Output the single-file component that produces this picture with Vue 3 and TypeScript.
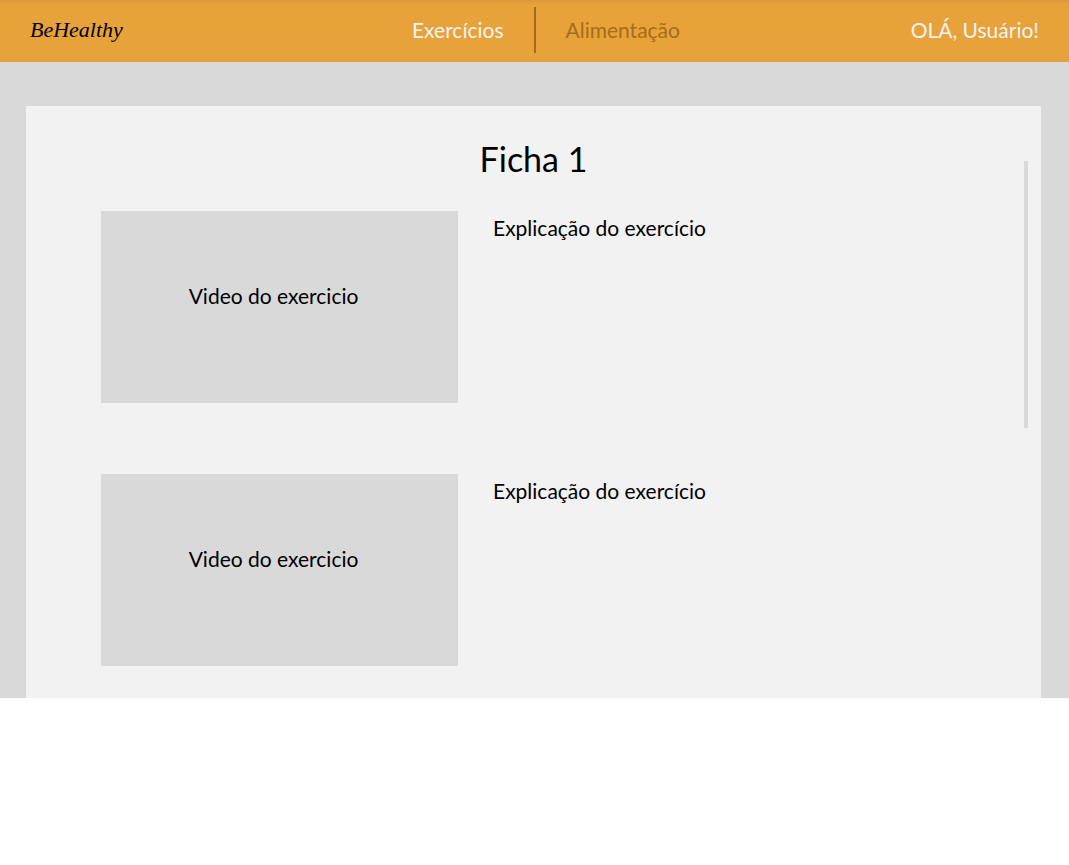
<script setup lang="ts">
interface Exercise {
  id: number
  video: string
  explanation: string
}

const sheetTitle = 'Ficha 1'

const exercises: Exercise[] = [
  { id: 1, video: 'Video do exercicio', explanation: 'Explicação do exercício' },
  { id: 2, video: 'Video do exercicio', explanation: 'Explicação do exercício' },
]
</script>

<template>
  <div class="page">
    <header class="topbar">
      <a class="logo" href="#">BeHealthy</a>
      <nav class="nav">
        <a class="nav-link active" href="#exercicios">Exercícios</a>
        <span class="divider" aria-hidden="true"></span>
        <a class="nav-link" href="#alimentacao">Alimentação</a>
      </nav>
      <a class="user" href="#perfil">OLÁ, Usuário!</a>
    </header>

    <main class="stage">
      <section class="sheet">
        <h1 class="title">{{ sheetTitle }}</h1>
        <ul class="list">
          <li v-for="item in exercises" :key="item.id" class="exercise">
            <div class="video">{{ item.video }}</div>
            <p class="explanation">{{ item.explanation }}</p>
          </li>
        </ul>
        <div class="scroll-thumb" aria-hidden="true"></div>
      </section>
    </main>
  </div>
</template>

<style>
body {
  margin: 0;
  background: #ffffff;
}
</style>

<style scoped>
.page {
  font-family: Lato, "Open Sans", sans-serif;
  font-size: 21px;
  line-height: 28px;
  color: #000000;
}

.topbar {
  display: grid;
  grid-template-columns: 1fr auto 1fr;
  align-items: center;
  height: 62px;
  padding: 0 30px 2px;
  box-sizing: border-box;
  background: linear-gradient(#de9936, #e7a23a 5px);
}

.topbar a {
  text-decoration: none;
}

.logo {
  justify-self: start;
  font-family: "Liberation Serif", serif;
  font-style: italic;
  font-size: 22px;
  color: #000000;
}

.nav {
  display: grid;
  grid-template-columns: 1fr 2px 1fr;
  column-gap: 30px;
  align-items: center;
}

.nav-link {
  color: #a66c1a;
}

.nav-link.active {
  justify-self: end;
  color: #f2f2f2;
}

.divider {
  height: 46px;
  background: #a66c1a;
}

.user {
  justify-self: end;
  color: #f2f2f2;
}

.stage {
  padding: 44px 28px 0 26px;
  background: #d9d9d9;
}

.sheet {
  position: relative;
  padding: 31px 75px 32px;
  background: #f2f2f2;
}

.title {
  margin: 0 0 30px;
  font-size: 34px;
  font-weight: 400;
  line-height: 44px;
  text-align: center;
}

.list {
  display: grid;
  row-gap: 71px;
  margin: 0;
  padding: 0;
  list-style: none;
}

.exercise {
  display: flex;
  gap: 35px;
}

.video {
  display: flex;
  flex: 0 1 357px;
  align-items: center;
  justify-content: center;
  height: 192px;
  padding: 0 12px 22px 0;
  box-sizing: border-box;
  background: #d9d9d9;
}

.explanation {
  flex: 1;
  margin: 3px 0 0;
}

.scroll-thumb {
  position: absolute;
  top: 55px;
  right: 13px;
  width: 4px;
  height: 267px;
  background: #d9d9d9;
}
</style>
